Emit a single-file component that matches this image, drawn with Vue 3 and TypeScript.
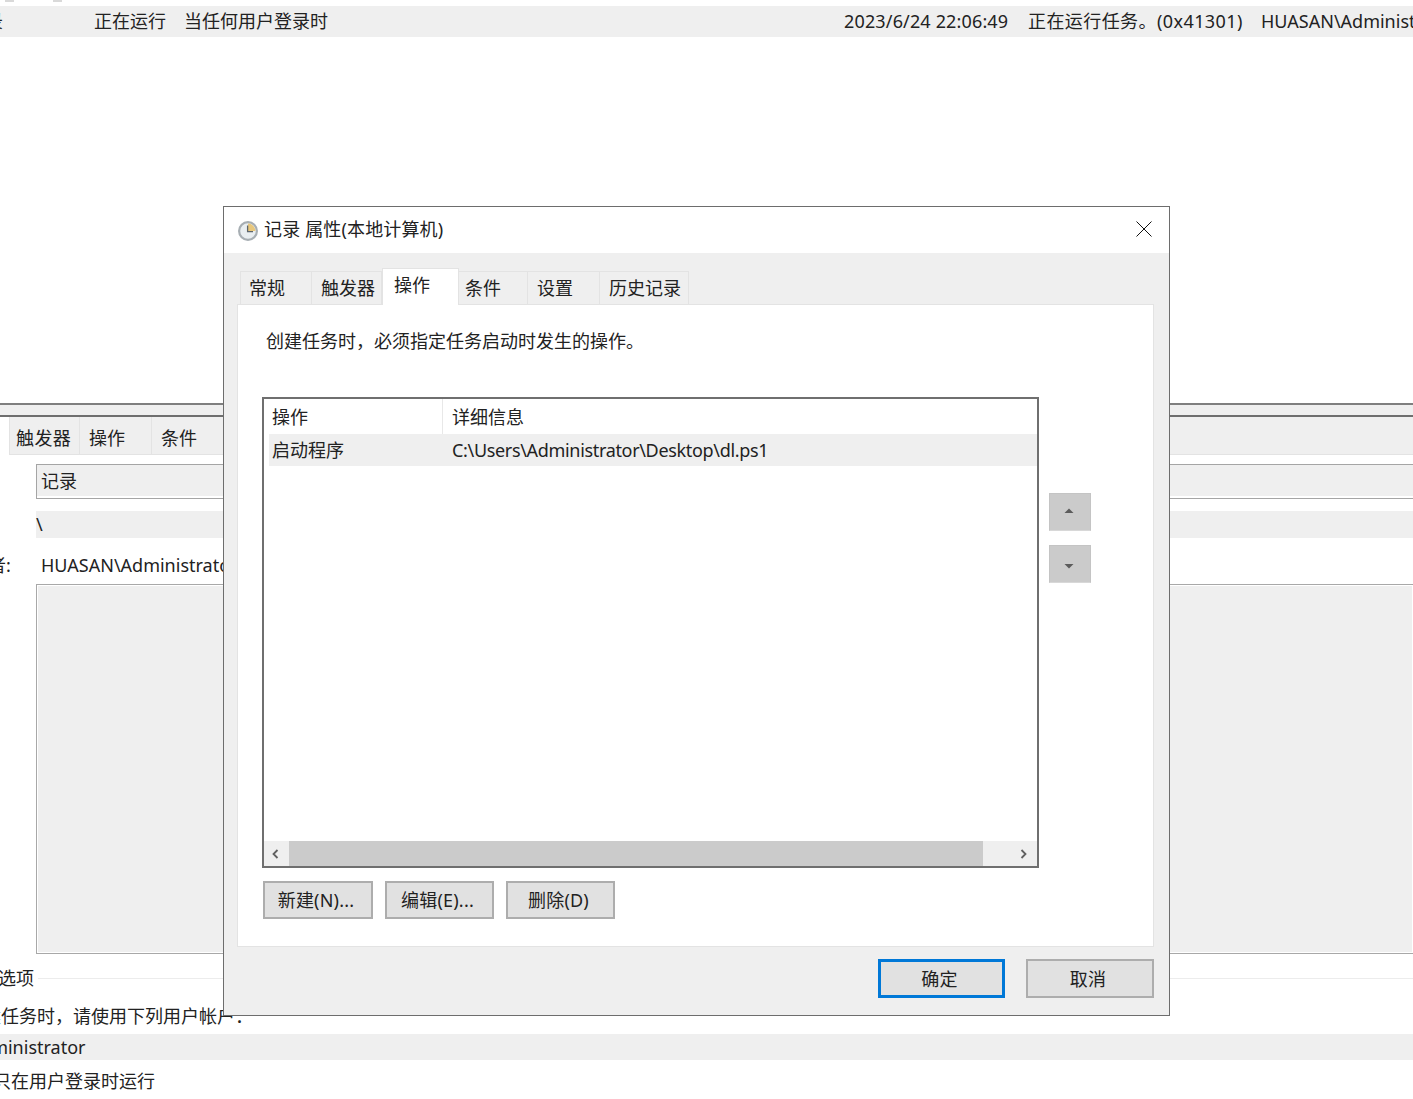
<script setup lang="ts">
const bgTabs: string[] = ['触发器', '操作', '条件']
const tabs: { label: string; cls: string; active?: boolean }[] = [
  { label: '常规', cls: 't1' },
  { label: '触发器', cls: 't2' },
  { label: '操作', cls: 't3', active: true },
  { label: '条件', cls: 't4' },
  { label: '设置', cls: 't5' },
  { label: '历史记录', cls: 't6' }
]
</script>

<template>
  <div class="screen">
    <div class="back">
      <div class="sliver"><i></i><i></i></div>
      <div class="task-row">
        <span class="c-name">录</span>
        <span class="c-status">正在运行</span>
        <span class="c-trigger">当任何用户登录时</span>
        <span class="c-time">2023/6/24 22:06:49</span>
        <span class="c-result">正在运行任务。(0x41301)</span>
        <span class="c-author">HUASAN\Administrator</span>
      </div>
      <div class="splitter"></div>
      <div class="back-tabs">
        <div class="back-tab-gap"></div>
        <div v-for="t in bgTabs" :key="t" class="back-tab">{{ t }}</div>
      </div>
      <div class="field name-field">记录</div>
      <div class="field loc-field">\</div>
      <div class="author-line"><span class="author-label">者:</span><span>HUASAN\Administrator</span></div>
      <div class="desc-box"></div>
      <div class="section"><span>选项</span><div class="section-rule"></div></div>
      <div class="run-as">建任务时，请使用下列用户帐户：</div>
      <div class="user-field"><span>HUASAN\Administrator</span></div>
      <div class="radio-line">只在用户登录时运行</div>
    </div>

    <section class="dialog">
      <header class="title-bar">
        <svg class="clock" width="20" height="20" viewBox="0 0 20 20">
          <circle cx="10" cy="10" r="8.9" fill="#e9eef1" stroke="#a7aeb3" stroke-width="2.2" />
          <path d="M10 2.6 A7.4 7.4 0 0 1 17.4 10 L10 10 Z" fill="#e8c77c" />
          <path d="M9.6 4.5 V10.6 H15" fill="none" stroke="#5d656b" stroke-width="1.3" />
        </svg>
        <span class="title">记录 属性(本地计算机)</span>
        <svg class="close" width="16" height="16" viewBox="0 0 16 16">
          <path d="M0.5 0.5 L15.5 15.5 M15.5 0.5 L0.5 15.5" stroke="#111" stroke-width="1" fill="none" />
        </svg>
      </header>

      <div class="dialog-body">
        <nav class="tabs">
          <div v-for="t in tabs" :key="t.label" class="tab" :class="[t.cls, { active: t.active }]">{{ t.label }}</div>
        </nav>

        <div class="panel">
          <p class="intro">创建任务时，必须指定任务启动时发生的操作。</p>
          <div class="list-area">
            <div class="list">
              <div class="list-head">
                <div class="col-a">操作</div>
                <div class="col-b">详细信息</div>
              </div>
              <div class="list-row">
                <div class="col-a">启动程序</div>
                <div class="col-b path">C:\Users\Administrator\Desktop\dl.ps1</div>
              </div>
              <div class="list-fill"></div>
              <div class="scrollbar">
                <div class="arrow">
                  <svg width="9" height="10" viewBox="0 0 9 10"><path d="M6.5 1 L2.5 5 L6.5 9" fill="none" stroke="#606060" stroke-width="1.8" /></svg>
                </div>
                <div class="thumb"></div>
                <div class="arrow right">
                  <svg width="9" height="10" viewBox="0 0 9 10"><path d="M2.5 1 L6.5 5 L2.5 9" fill="none" stroke="#606060" stroke-width="1.8" /></svg>
                </div>
              </div>
            </div>
            <div class="movers">
              <button class="mover up"><svg width="10" height="6" viewBox="0 0 10 6"><path d="M5 0.5 L9.5 5 H0.5 Z" fill="#5c5c5c" /></svg></button>
              <button class="mover down"><svg width="10" height="6" viewBox="0 0 10 6"><path d="M0.5 1 H9.5 L5 5.5 Z" fill="#5c5c5c" /></svg></button>
            </div>
          </div>
          <div class="actions">
            <button class="btn">新建(N)...</button>
            <button class="btn">编辑(E)...</button>
            <button class="btn">删除(D)</button>
          </div>
        </div>

        <footer class="footer">
          <button class="btn big primary">确定</button>
          <button class="btn big">取消</button>
        </footer>
      </div>
    </section>
  </div>
</template>

<style>
html, body { margin: 0; background: #fff; }
</style>

<style scoped>
.screen {
  position: relative;
  width: 1413px;
  height: 1099px;
  overflow: hidden;
  background: #fff;
  color: #222;
  font-family: "Noto Sans", "Noto Sans CJK SC", sans-serif;
  font-size: 18px;
  line-height: 26px;
}
.back { display: flex; flex-direction: column; width: 1413px; }
.sliver { display: flex; height: 6px; gap: 39px; padding-left: 5px; }
.sliver i { display: block; width: 9px; height: 2px; background: #d9d9d9; }
.task-row { display: flex; align-items: center; height: 31px; background: #efefef; white-space: nowrap; }
.task-row span { flex: none; margin-top: -1px; }
.c-name { width: 3px; overflow: hidden; direction: rtl; margin-right: 91px; }
.c-status { width: 90px; }
.c-trigger { width: 660px; }
.c-time { width: 184px; letter-spacing: 0.15px; }
.c-result { width: 233px; letter-spacing: 0.42px; }
.splitter {
  height: 10px;
  margin-top: 366px;
  border-top: 2px solid #7f7f7f;
  border-bottom: 2px solid #6e6e6e;
  background: #efefef;
}
.back-tabs { display: flex; height: 37px; background: #efefef; border-bottom: 1px solid #e3e3e3; }
.back-tab-gap { width: 10px; background: #fff; border-right: 1px solid #e3e3e3; box-sizing: border-box; margin-bottom: -1px; }
.back-tab { width: 72px; padding-left: 9px; line-height: 42px; box-sizing: border-box; border-right: 1px solid #e3e3e3; }
.back-tab:nth-child(2) { width: 70px; padding-left: 6px; letter-spacing: 0.4px; }
.field { margin-left: 36px; box-sizing: border-box; }
.name-field {
  height: 35px; margin-top: 9px; padding-left: 4px; line-height: 32px;
  background: #efefef; border: 1px solid #a5a5a5; border-right: none;
  box-shadow: inset 0 -2px 0 #fff;
}
.loc-field { height: 27px; margin-top: 12px; line-height: 26px; background: #efefef; }
.author-line { display: flex; height: 26px; margin-top: 14px; margin-left: -12px; white-space: nowrap; }
.author-label { width: 53px; }
.desc-box {
  height: 370px; margin-top: 6px; margin-left: 36px; box-sizing: border-box;
  background: #efefef; border: 1px solid #a8a8a8; border-right: none; box-shadow: inset 0 0 0 1px #fff;
}
.section { display: flex; align-items: center; height: 26px; margin-top: 11px; margin-left: -2px; gap: 4px; }
.section-rule { flex: 1; height: 1px; background: #ececec; }
.run-as { height: 26px; margin-top: 12px; margin-left: -17px; white-space: nowrap; }
.user-field { display: flex; height: 26px; margin-top: 5px; background: #efefef; white-space: nowrap; }
.user-field span { margin-left: -111px; }
.radio-line { height: 26px; margin-top: 8px; margin-left: -7px; white-space: nowrap; }

.dialog {
  position: absolute;
  left: 223px;
  top: 206px;
  width: 947px;
  height: 810px;
  box-sizing: border-box;
  display: flex;
  flex-direction: column;
  border: 1px solid #6d6d6d;
  background: #efefef;
}
.title-bar { display: flex; align-items: center; height: 46px; flex: none; background: #fff; padding-left: 14px; box-sizing: border-box; }
.clock { margin-right: 6px; margin-top: 2px; }
.title { flex: 1; margin-top: -3px; letter-spacing: 0.15px; }
.close { margin-right: 17px; margin-top: -3px; }
.dialog-body { flex: 1; display: flex; flex-direction: column; padding: 16px 15px 0 13px; }
.tabs { display: flex; align-items: flex-end; height: 36px; padding-left: 3px; position: relative; z-index: 1; margin-bottom: -1px; }
.tab {
  height: 34px; box-sizing: border-box; padding-left: 10px; line-height: 33px;
  border-top: 1px solid #e3e3e3; border-right: 1px solid #e3e3e3; border-bottom: 1px solid #e3e3e3;
}
.t1 { width: 72px; padding-left: 8px; border-left: 1px solid #e3e3e3; }
.t2 { width: 70px; padding-left: 9px; }
.t3 { width: 77px; padding-left: 11px; }
.t4 { width: 69px; padding-left: 6px; }
.t5 { width: 72px; padding-left: 9px; }
.t6 { width: 89px; padding-left: 9px; }
.tab.active { height: 37px; background: #fff; border-bottom: none; border-left: 1px solid #e3e3e3; line-height: 32px; }
.panel {
  height: 643px; box-sizing: border-box; flex: none;
  background: #fff; border: 1px solid #e3e3e3;
  padding: 0 0 0 24px;
  display: flex; flex-direction: column;
}
.intro { margin: 23px 0 0 4px; height: 26px; font-size: 18px; }
.list-area { display: flex; margin-top: 43px; }
.list {
  width: 777px; height: 471px; box-sizing: border-box; flex: none;
  display: flex; flex-direction: column;
  border: 2px solid #6f6f6f;
}
.list-head { display: flex; height: 35px; flex: none; line-height: 37px; }
.list-head .col-a { border-right: 1px solid #e8e8e8; }
.col-a { width: 179px; padding-left: 8px; box-sizing: border-box; }
.col-b { padding-left: 9px; white-space: nowrap; }
.path { letter-spacing: -0.33px; }
.list-row { display: flex; height: 32px; flex: none; margin-left: 5px; background: #efefef; line-height: 33px; }
.list-row .col-a { width: 174px; padding-left: 3px; }
.list-fill { flex: 1; }
.scrollbar { display: flex; height: 25px; flex: none; background: #efefef; }
.arrow { width: 25px; display: flex; align-items: center; justify-content: center; padding-right: 3px; box-sizing: border-box; }
.thumb { width: 694px; background: #cbcbcb; }
.arrow.right { flex: 1; justify-content: flex-end; padding-right: 9px; }
.movers { display: flex; flex-direction: column; gap: 14px; margin: 96px 0 0 10px; }
.mover {
  width: 42px; height: 38px; padding: 0 2px 0 0; display: flex; align-items: center; justify-content: center;
  background: #cbcbcb; border: 1px solid #c4c4c4; border-bottom-color: #d8d8d8;
}
.mover.up svg { margin-top: -3px; }
.mover.down svg { margin-top: 3px; }
.actions { display: flex; gap: 12px; margin-top: 13px; margin-left: 1px; }
.btn {
  width: 110px; height: 38px; padding: 0 4px 0 0; box-sizing: border-box;
  font: inherit; color: #222; letter-spacing: 0.2px;
  background: #e1e1e1; border: 2px solid #adadad;
}
.actions .btn:nth-child(2), .actions .btn:nth-child(3) { width: 109px; }
.footer { display: flex; justify-content: flex-end; gap: 21px; margin-top: 12px; }
.btn.big { width: 127px; height: 39px; }
.btn.big:last-child { width: 128px; }
.btn.primary { border: 3px solid #0078d7; }
</style>
